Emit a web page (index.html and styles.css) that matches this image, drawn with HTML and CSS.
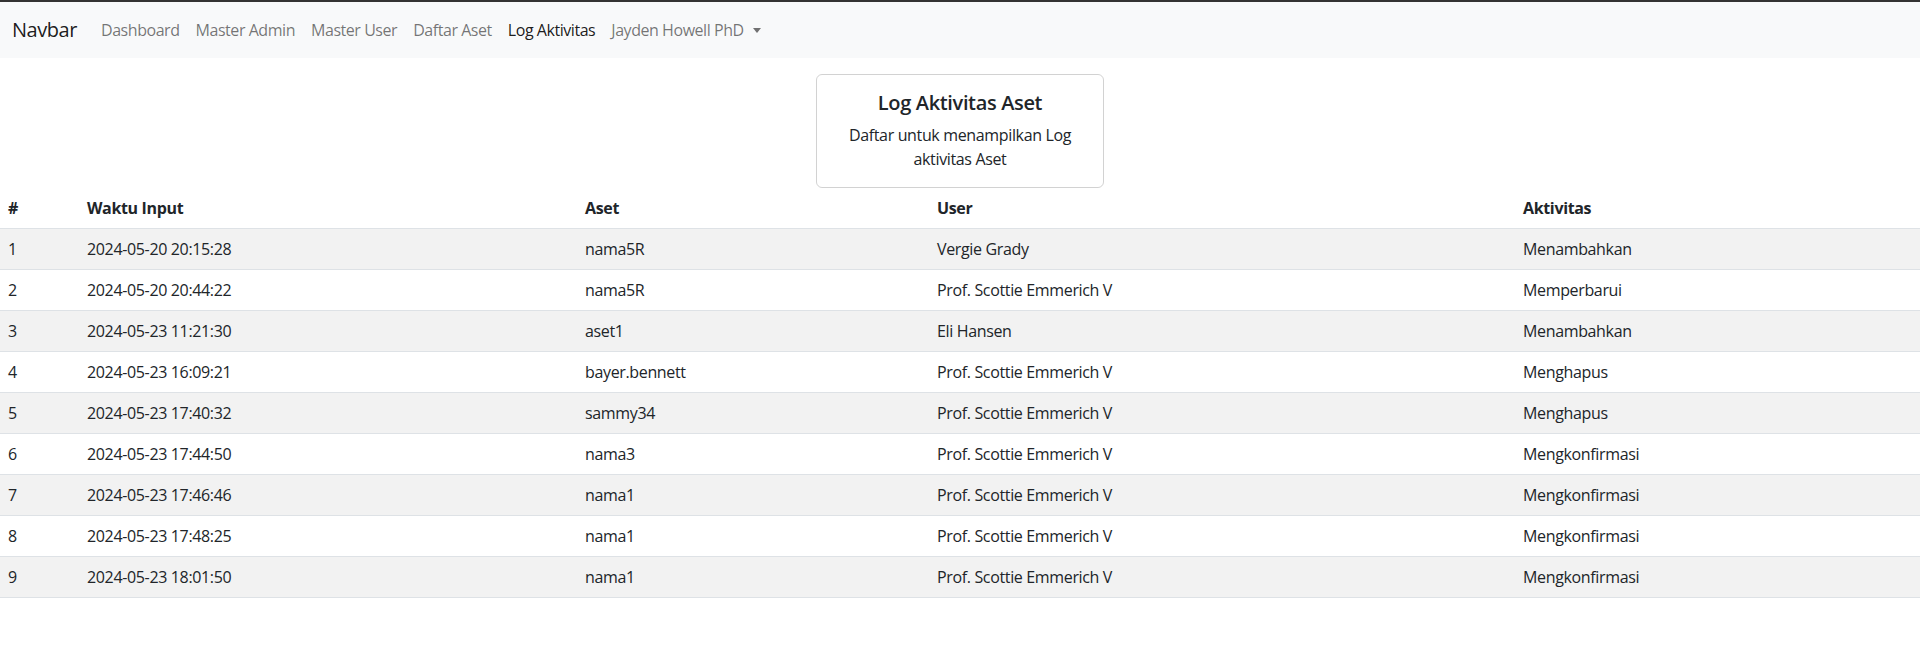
FILE: index.html
```html
<!DOCTYPE html>
<html lang="id">
<head>
<meta charset="utf-8">
<title>Log Aktivitas</title>
<link rel="stylesheet" href="styles.css">
</head>
<body>
<div class="topline"></div>
<nav class="navbar">
  <a class="brand" href="#">Navbar</a>
  <ul class="nav">
    <li><a class="nav-link" href="#">Dashboard</a></li>
    <li><a class="nav-link" href="#">Master Admin</a></li>
    <li><a class="nav-link" href="#">Master User</a></li>
    <li><a class="nav-link" href="#">Daftar Aset</a></li>
    <li><a class="nav-link active" href="#">Log Aktivitas</a></li>
    <li><a class="nav-link dropdown" href="#">Jayden Howell PhD<span class="caret"></span></a></li>
  </ul>
</nav>

<div class="card">
  <h5 class="card-title">Log Aktivitas Aset</h5>
  <p class="card-text">Daftar untuk menampilkan Log aktivitas Aset</p>
</div>

<table class="table">
  <colgroup>
    <col class="c1"><col class="c2"><col class="c3"><col class="c4"><col class="c5">
  </colgroup>
  <thead>
    <tr><th>#</th><th>Waktu Input</th><th>Aset</th><th>User</th><th>Aktivitas</th></tr>
  </thead>
  <tbody>
    <tr><td>1</td><td>2024-05-20 20:15:28</td><td>nama5R</td><td>Vergie Grady</td><td>Menambahkan</td></tr>
    <tr><td>2</td><td>2024-05-20 20:44:22</td><td>nama5R</td><td>Prof. Scottie Emmerich V</td><td>Memperbarui</td></tr>
    <tr><td>3</td><td>2024-05-23 11:21:30</td><td>aset1</td><td>Eli Hansen</td><td>Menambahkan</td></tr>
    <tr><td>4</td><td>2024-05-23 16:09:21</td><td>bayer.bennett</td><td>Prof. Scottie Emmerich V</td><td>Menghapus</td></tr>
    <tr><td>5</td><td>2024-05-23 17:40:32</td><td>sammy34</td><td>Prof. Scottie Emmerich V</td><td>Menghapus</td></tr>
    <tr><td>6</td><td>2024-05-23 17:44:50</td><td>nama3</td><td>Prof. Scottie Emmerich V</td><td>Mengkonfirmasi</td></tr>
    <tr><td>7</td><td>2024-05-23 17:46:46</td><td>nama1</td><td>Prof. Scottie Emmerich V</td><td>Mengkonfirmasi</td></tr>
    <tr><td>8</td><td>2024-05-23 17:48:25</td><td>nama1</td><td>Prof. Scottie Emmerich V</td><td>Mengkonfirmasi</td></tr>
    <tr><td>9</td><td>2024-05-23 18:01:50</td><td>nama1</td><td>Prof. Scottie Emmerich V</td><td>Mengkonfirmasi</td></tr>
  </tbody>
</table>
</body>
</html>
```

FILE: styles.css
```css
* { box-sizing: border-box; }
html, body { margin: 0; padding: 0; }
body {
  font-family: "Open Sans", "Noto Sans", "Liberation Sans", sans-serif;
  font-size: 16px;
  line-height: 1.5;
  color: #212529;
  background: #fff;
  letter-spacing: -0.35px;
}
.topline { height: 2px; background: #333; }
.navbar {
  display: flex;
  align-items: center;
  background: #f8f9fa;
  padding: 8px 12px;
  height: 56px;
  letter-spacing: -0.45px;
}
.brand {
  font-size: 20px;
  line-height: 30px;
  padding: 5px 0;
  margin-right: 16px;
  color: rgba(0,0,0,.9);
  text-decoration: none;
}
.nav { display: flex; list-style: none; margin: 0; padding: 0; }
.nav-link {
  display: flex;
  align-items: center;
  padding: 8px;
  color: rgba(0,0,0,.55);
  text-decoration: none;
}
.nav-link.active { color: rgba(0,0,0,.9); }
.caret {
  display: inline-block;
  margin-left: 9px;
  border-top: 5px solid currentColor;
  border-left: 4px solid transparent;
  border-right: 4px solid transparent;
  margin-top: 1px;
}
.card {
  width: 288px;
  margin: 16px auto 0;
  border: 1px solid rgba(0,0,0,.175);
  border-radius: 6px;
  padding: 16px;
  text-align: center;
}
.card-title {
  margin: 0 0 8px;
  font-size: 20px;
  font-weight: 600;
  line-height: 1.2;
}
.card-text { margin: 0; }
.table {
  width: 100%;
  border-collapse: collapse;
  table-layout: fixed;
}
.c1 { width: 79px; }
.c2 { width: 498px; }
.c3 { width: 352px; }
.c4 { width: 586px; }
.c5 { width: auto; }
.table th, .table td {
  padding: 8px;
  text-align: left;
  border-bottom: 1px solid #dee2e6;
  line-height: 24px;
  white-space: nowrap;
}
.table th { font-weight: 700; }
.table tbody tr:nth-child(odd) td { background: #f2f2f2; }
```
